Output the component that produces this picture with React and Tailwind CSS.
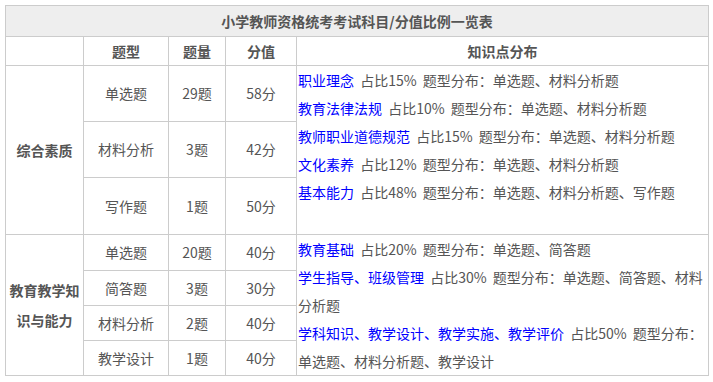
const groups = [
  {
    name: ['综合素质'],
    rows: [
      { type: '单选题', count: '29题', score: '58分', h: 'h-[56px]' },
      { type: '材料分析', count: '3题', score: '42分', h: 'h-[56px]' },
      { type: '写作题', count: '1题', score: '50分', h: 'h-[57px]' },
    ],
    points: [
      ['职业理念', '占比15% 题型分布：单选题、材料分析题'],
      ['教育法律法规', '占比10% 题型分布：单选题、材料分析题'],
      ['教师职业道德规范', '占比15% 题型分布：单选题、材料分析题'],
      ['文化素养', '占比12% 题型分布：单选题、材料分析题'],
      ['基本能力', '占比48% 题型分布：单选题、材料分析题、写作题'],
    ],
  },
  {
    name: ['教育教学知', '识与能力'],
    rows: [
      { type: '单选题', count: '20题', score: '40分', h: 'h-[36px]' },
      { type: '简答题', count: '3题', score: '30分', h: 'h-[35px]' },
      { type: '材料分析', count: '2题', score: '40分', h: 'h-[35px]' },
      { type: '教学设计', count: '1题', score: '40分', h: 'h-[35px]' },
    ],
    points: [
      ['教育基础', '占比20% 题型分布：单选题、简答题'],
      ['学生指导、班级管理', '占比30% 题型分布：单选题、简答题、材料', '分析题'],
      ['学科知识、教学设计、教学实施、教学评价', '占比50% 题型分布：', '单选题、材料分析题、教学设计'],
    ],
  },
];

const cell = 'border border-[#cccccc] p-0';

function Points({ items }) {
  return (
    <div className="pl-px leading-[28px] [word-spacing:3px] whitespace-nowrap">
      {items.map(([link, rest, more], i) => (
        <div key={i}>
          <span className="text-[#0000ff]">{link}</span>
          <span> {rest}</span>
          {more && <div>{more}</div>}
        </div>
      ))}
    </div>
  );
}

export default function App() {
  return (
    <div className="bg-white pl-[5px] pt-[5px] text-[14px] text-[#555555] font-['Noto_Sans_CJK_SC','Noto_Sans',sans-serif]">
      <table className="w-[704px] table-fixed border-collapse">
        <colgroup>
          <col className="w-[78px]" />
          <col className="w-[85px]" />
          <col className="w-[57px]" />
          <col className="w-[71px]" />
          <col />
        </colgroup>
        <tbody>
          <tr className="h-[31px] bg-[#eeeeee]">
            <td colSpan={5} className={`${cell} text-center font-bold`}>
              小学教师资格统考考试科目/分值比例一览表
            </td>
          </tr>
          <tr className="h-[29px] font-bold">
            <td className={cell}></td>
            <td className={`${cell} text-center`}>题型</td>
            <td className={`${cell} text-center`}>题量</td>
            <td className={`${cell} text-center`}>分值</td>
            <td className={`${cell} text-center`}>知识点分布</td>
          </tr>
          {groups.map((g, gi) =>
            g.rows.map((r, ri) => (
              <tr key={`${gi}-${ri}`} className={r.h}>
                {ri === 0 && (
                  <td rowSpan={g.rows.length} className={`${cell} text-center font-bold leading-[30px]`}>
                    {g.name.map((n) => (
                      <div key={n}>{n}</div>
                    ))}
                  </td>
                )}
                <td className={`${cell} text-center`}>{r.type}</td>
                <td className={`${cell} text-center`}>{r.count}</td>
                <td className={`${cell} text-center`}>{r.score}</td>
                {ri === 0 && (
                  <td rowSpan={g.rows.length} className={`${cell} align-top`}>
                    <Points items={g.points} />
                  </td>
                )}
              </tr>
            ))
          )}
        </tbody>
      </table>
    </div>
  );
}
